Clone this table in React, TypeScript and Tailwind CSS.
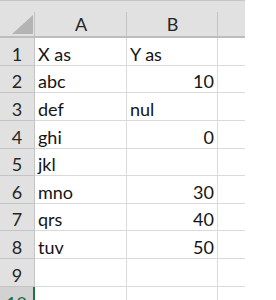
import React from "react";

const rows: { n: number; a: string; b: string; num?: boolean }[] = [
  { n: 1, a: "X as", b: "Y as" },
  { n: 2, a: "abc", b: "10", num: true },
  { n: 3, a: "def", b: "nul" },
  { n: 4, a: "ghi", b: "0", num: true },
  { n: 5, a: "jkl", b: "" },
  { n: 6, a: "mno", b: "30", num: true },
  { n: 7, a: "qrs", b: "40", num: true },
  { n: 8, a: "tuv", b: "50", num: true },
  { n: 9, a: "", b: "" },
];

export default function App() {
  return (
    <div
      className="w-[276px] h-[300px] bg-white overflow-hidden text-[18px] text-[#141414]"
      style={{ fontFamily: "Lato, 'Open Sans', sans-serif" }}
    >
      <div className="w-[245px]">
        {/* column header */}
        <div className="flex h-[38px] bg-[#e1e1e1] border-t border-[#c6c6c6] border-b-2 border-b-[#bdbdbd]">
          <div className="relative w-[35px] shrink-0 after:absolute after:right-0 after:top-[11px] after:bottom-0 after:w-px after:bg-[#c4c4c4]">
            <svg className="absolute left-[12px] top-[14px]" width="22" height="19" viewBox="0 0 22 19">
              <polygon points="0,19 21,19 21,0" fill="#b4b4b4" />
            </svg>
          </div>
          <div className="relative w-[92px] shrink-0 flex items-end justify-center pb-[2px] leading-[20px] text-[#262626] after:absolute after:right-0 after:top-[11px] after:bottom-0 after:w-px after:bg-[#c4c4c4]">
            A
          </div>
          <div className="relative w-[91px] shrink-0 flex items-end justify-center pb-[2px] leading-[20px] text-[#262626] after:absolute after:right-0 after:top-[11px] after:bottom-0 after:w-px after:bg-[#c4c4c4]">
            B
          </div>
          <div className="flex-1" />
        </div>
        {rows.map((r) => (
          <div key={r.n} className="flex h-[27.65px]">
            <div className="w-[35px] shrink-0 bg-[#e1e1e1] border-r border-[#c4c4c4] border-b border-b-[#c4c4c4] flex items-end justify-center pb-[1px] leading-[20px] text-[#262626]">
              {r.n}
            </div>
            <div className="w-[92px] shrink-0 border-r border-b border-[#dadada] flex items-end pl-[3px] pb-[1px] leading-[20px]">
              {r.a}
            </div>
            <div
              className={
                "w-[91px] shrink-0 border-r border-b border-[#dadada] flex items-end pb-[1px] leading-[20px] " +
                (r.num ? "justify-end pr-[3px]" : "pl-[3px]")
              }
            >
              {r.b}
            </div>
            <div className="flex-1 border-b border-[#dadada]" />
          </div>
        ))}
        <div className="flex h-[27.65px]">
          <div className="w-[35px] shrink-0 bg-[#d2d2d2] border-r-2 border-[#217346] flex items-start justify-center pt-[6px] leading-[20px] text-[#1d6b40]">
            10
          </div>
          <div className="w-[92px] shrink-0 border-r border-[#dadada]" />
          <div className="w-[91px] shrink-0 border-r border-[#dadada]" />
          <div className="flex-1" />
        </div>
      </div>
    </div>
  );
}
